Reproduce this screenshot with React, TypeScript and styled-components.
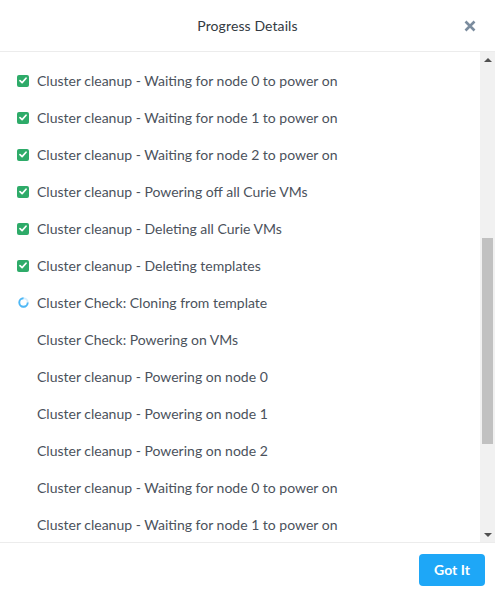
import React, { useLayoutEffect, useRef, useState } from "react";
import styled, { createGlobalStyle } from "styled-components";

const Global = createGlobalStyle`
  html, body { margin: 0; padding: 0; background: #fff; }
  body { font-family: Lato, "Liberation Sans", Arial, sans-serif; }
  #root { height: 596px; }
`;

const Dialog = styled.div`
  width: 495px;
  height: 596px;
  display: flex;
  flex-direction: column;
  background: #fff;
`;

const Header = styled.div`
  position: relative;
  height: 51px;
  flex: 0 0 auto;
  display: flex;
  align-items: center;
  justify-content: center;
  border-bottom: 1px solid #ececec;
`;

const Title = styled.div`
  font-size: 14px;
  color: #333a42;
  letter-spacing: 0.1px;
`;

const Close = styled.button`
  position: absolute;
  right: 18px;
  top: 19px;
  width: 14px;
  height: 14px;
  padding: 0;
  border: 0;
  background: none;
  display: flex;
  align-items: center;
  justify-content: center;
`;

const BodyWrap = styled.div`
  flex: 1 1 auto;
  min-height: 0;
  display: flex;
`;

const List = styled.div`
  flex: 1 1 auto;
  overflow: hidden;
  padding: 10px 0;
  box-sizing: border-box;
`;

const ScrollBar = styled.div`
  width: 15px;
  flex: 0 0 auto;
  display: flex;
  flex-direction: column;
  background: #f1f1f1;
`;

const ArrowButton = styled.div`
  height: 15px;
  flex: 0 0 auto;
  display: flex;
  align-items: center;
  justify-content: center;
`;

const Track = styled.div`
  flex: 1 1 auto;
  display: flex;
  flex-direction: column;
`;

const Thumb = styled.div`
  flex: 0 0 auto;
  margin: 0 2px;
  background: #c1c1c1;
`;

const Row = styled.div`
  height: 37px;
  display: flex;
  align-items: center;
  padding-left: 17px;
  gap: 8px;
  font-size: 14px;
  color: #4b525c;
`;

const IconSlot = styled.span`
  width: 12px;
  height: 12px;
  flex: 0 0 auto;
  display: flex;
  align-items: center;
  justify-content: center;
`;

const Check = styled.span`
  width: 12px;
  height: 12px;
  border-radius: 2px;
  background: #2eab69;
  display: flex;
  align-items: center;
  justify-content: center;
`;

const Spinner = styled.svg`
  width: 11px;
  height: 11px;
`;

const Footer = styled.div`
  flex: 0 0 auto;
  height: 53px;
  border-top: 1px solid #ececec;
  display: flex;
  align-items: center;
  justify-content: flex-end;
  padding-right: 10px;
`;

const Button = styled.button`
  width: 66px;
  height: 32px;
  border: 0;
  border-radius: 4px;
  background: #1ea7f7;
  color: #fff;
  font-family: Lato, "Liberation Sans", Arial, sans-serif;
  font-weight: 700;
  font-size: 14px;
  cursor: pointer;
`;

type Status = "done" | "running" | "pending";

const items: { label: string; status: Status }[] = [
  { label: "Cluster cleanup - Starting", status: "done" },
  { label: "Cluster cleanup - Validating cluster", status: "done" },
  { label: "Cluster cleanup - Powering off node 0", status: "done" },
  { label: "Cluster cleanup - Powering off node 1", status: "done" },
  { label: "Cluster cleanup - Powering off node 2", status: "done" },
  { label: "Cluster cleanup - Waiting for node 0 to power off", status: "done" },
  { label: "Cluster cleanup - Waiting for node 1 to power off", status: "done" },
  { label: "Cluster cleanup - Waiting for node 2 to power off", status: "done" },
  { label: "Cluster cleanup - Powering on node 0", status: "done" },
  { label: "Cluster cleanup - Powering on node 1", status: "done" },
  { label: "Cluster cleanup - Powering on node 2", status: "done" },
  { label: "Cluster cleanup - Waiting for node 0 to power on", status: "done" },
  { label: "Cluster cleanup - Waiting for node 1 to power on", status: "done" },
  { label: "Cluster cleanup - Waiting for node 2 to power on", status: "done" },
  { label: "Cluster cleanup - Powering off all Curie VMs", status: "done" },
  { label: "Cluster cleanup - Deleting all Curie VMs", status: "done" },
  { label: "Cluster cleanup - Deleting templates", status: "done" },
  { label: "Cluster Check: Cloning from template", status: "running" },
  { label: "Cluster Check: Powering on VMs", status: "pending" },
  { label: "Cluster cleanup - Powering on node 0", status: "pending" },
  { label: "Cluster cleanup - Powering on node 1", status: "pending" },
  { label: "Cluster cleanup - Powering on node 2", status: "pending" },
  { label: "Cluster cleanup - Waiting for node 0 to power on", status: "pending" },
  { label: "Cluster cleanup - Waiting for node 1 to power on", status: "pending" },
  { label: "Cluster cleanup - Waiting for node 2 to power on", status: "pending" },
  { label: "Cluster cleanup - Powering off all Curie VMs", status: "pending" },
  { label: "Cluster cleanup - Deleting all Curie VMs", status: "pending" },
  { label: "Cluster cleanup - Deleting templates", status: "pending" },
  { label: "Cluster Check: Complete", status: "pending" },
];

function StatusIcon({ status }: { status: Status }) {
  if (status === "done")
    return (
      <Check>
        <svg width="8" height="7" viewBox="0 0 8 7">
          <path d="M1 3.6 L3.1 5.6 L7 1.2" fill="none" stroke="#fff" strokeWidth="1.7" strokeLinecap="round" strokeLinejoin="round" />
        </svg>
      </Check>
    );
  if (status === "running")
    return (
      <Spinner viewBox="0 0 12 12">
        <circle cx="6" cy="6" r="4.6" fill="none" stroke="#d6efff" strokeWidth="2" />
        <path d="M6 1.4 A4.6 4.6 0 1 0 10.6 6" fill="none" stroke="#4fb8f5" strokeWidth="2" />
      </Spinner>
    );
  return null;
}

export default function App() {
  const listRef = useRef<HTMLDivElement>(null);
  const trackRef = useRef<HTMLDivElement>(null);
  const [thumb, setThumb] = useState({ top: 171, height: 207 });

  useLayoutEffect(() => {
    const el = listRef.current;
    const tr = trackRef.current;
    if (!el || !tr) return;
    el.scrollTop = 11 * 37;
    const total = el.scrollHeight;
    const view = el.clientHeight;
    const trackH = tr.clientHeight;
    const h = Math.round((trackH * view) / total);
    const top = Math.round((el.scrollTop / (total - view)) * (trackH - h));
    setThumb({ top, height: h });
  }, []);

  return (
    <Dialog>
      <Global />
      <Header>
        <Title>Progress Details</Title>
        <Close aria-label="Close">
          <svg width="12" height="12" viewBox="0 0 12 12">
            <path d="M1.5 1.5 L10.5 10.5 M10.5 1.5 L1.5 10.5" stroke="#7b8c9e" strokeWidth="2.6" strokeLinecap="butt" />
          </svg>
        </Close>
      </Header>
      <BodyWrap>
        <List ref={listRef}>
          {items.map((it, i) => (
            <Row key={i}>
              <IconSlot>
                <StatusIcon status={it.status} />
              </IconSlot>
              <span>{it.label}</span>
            </Row>
          ))}
        </List>
        <ScrollBar>
          <ArrowButton>
            <svg width="8" height="4" viewBox="0 0 8 4">
              <path d="M0 4 L4 0 L8 4 Z" fill="#505050" />
            </svg>
          </ArrowButton>
          <Track ref={trackRef}>
            <div style={{ height: thumb.top, flex: "0 0 auto" }} />
            <Thumb style={{ height: thumb.height }} />
          </Track>
          <ArrowButton>
            <svg width="8" height="4" viewBox="0 0 8 4">
              <path d="M0 0 L4 4 L8 0 Z" fill="#505050" />
            </svg>
          </ArrowButton>
        </ScrollBar>
      </BodyWrap>
      <Footer>
        <Button>Got It</Button>
      </Footer>
    </Dialog>
  );
}
